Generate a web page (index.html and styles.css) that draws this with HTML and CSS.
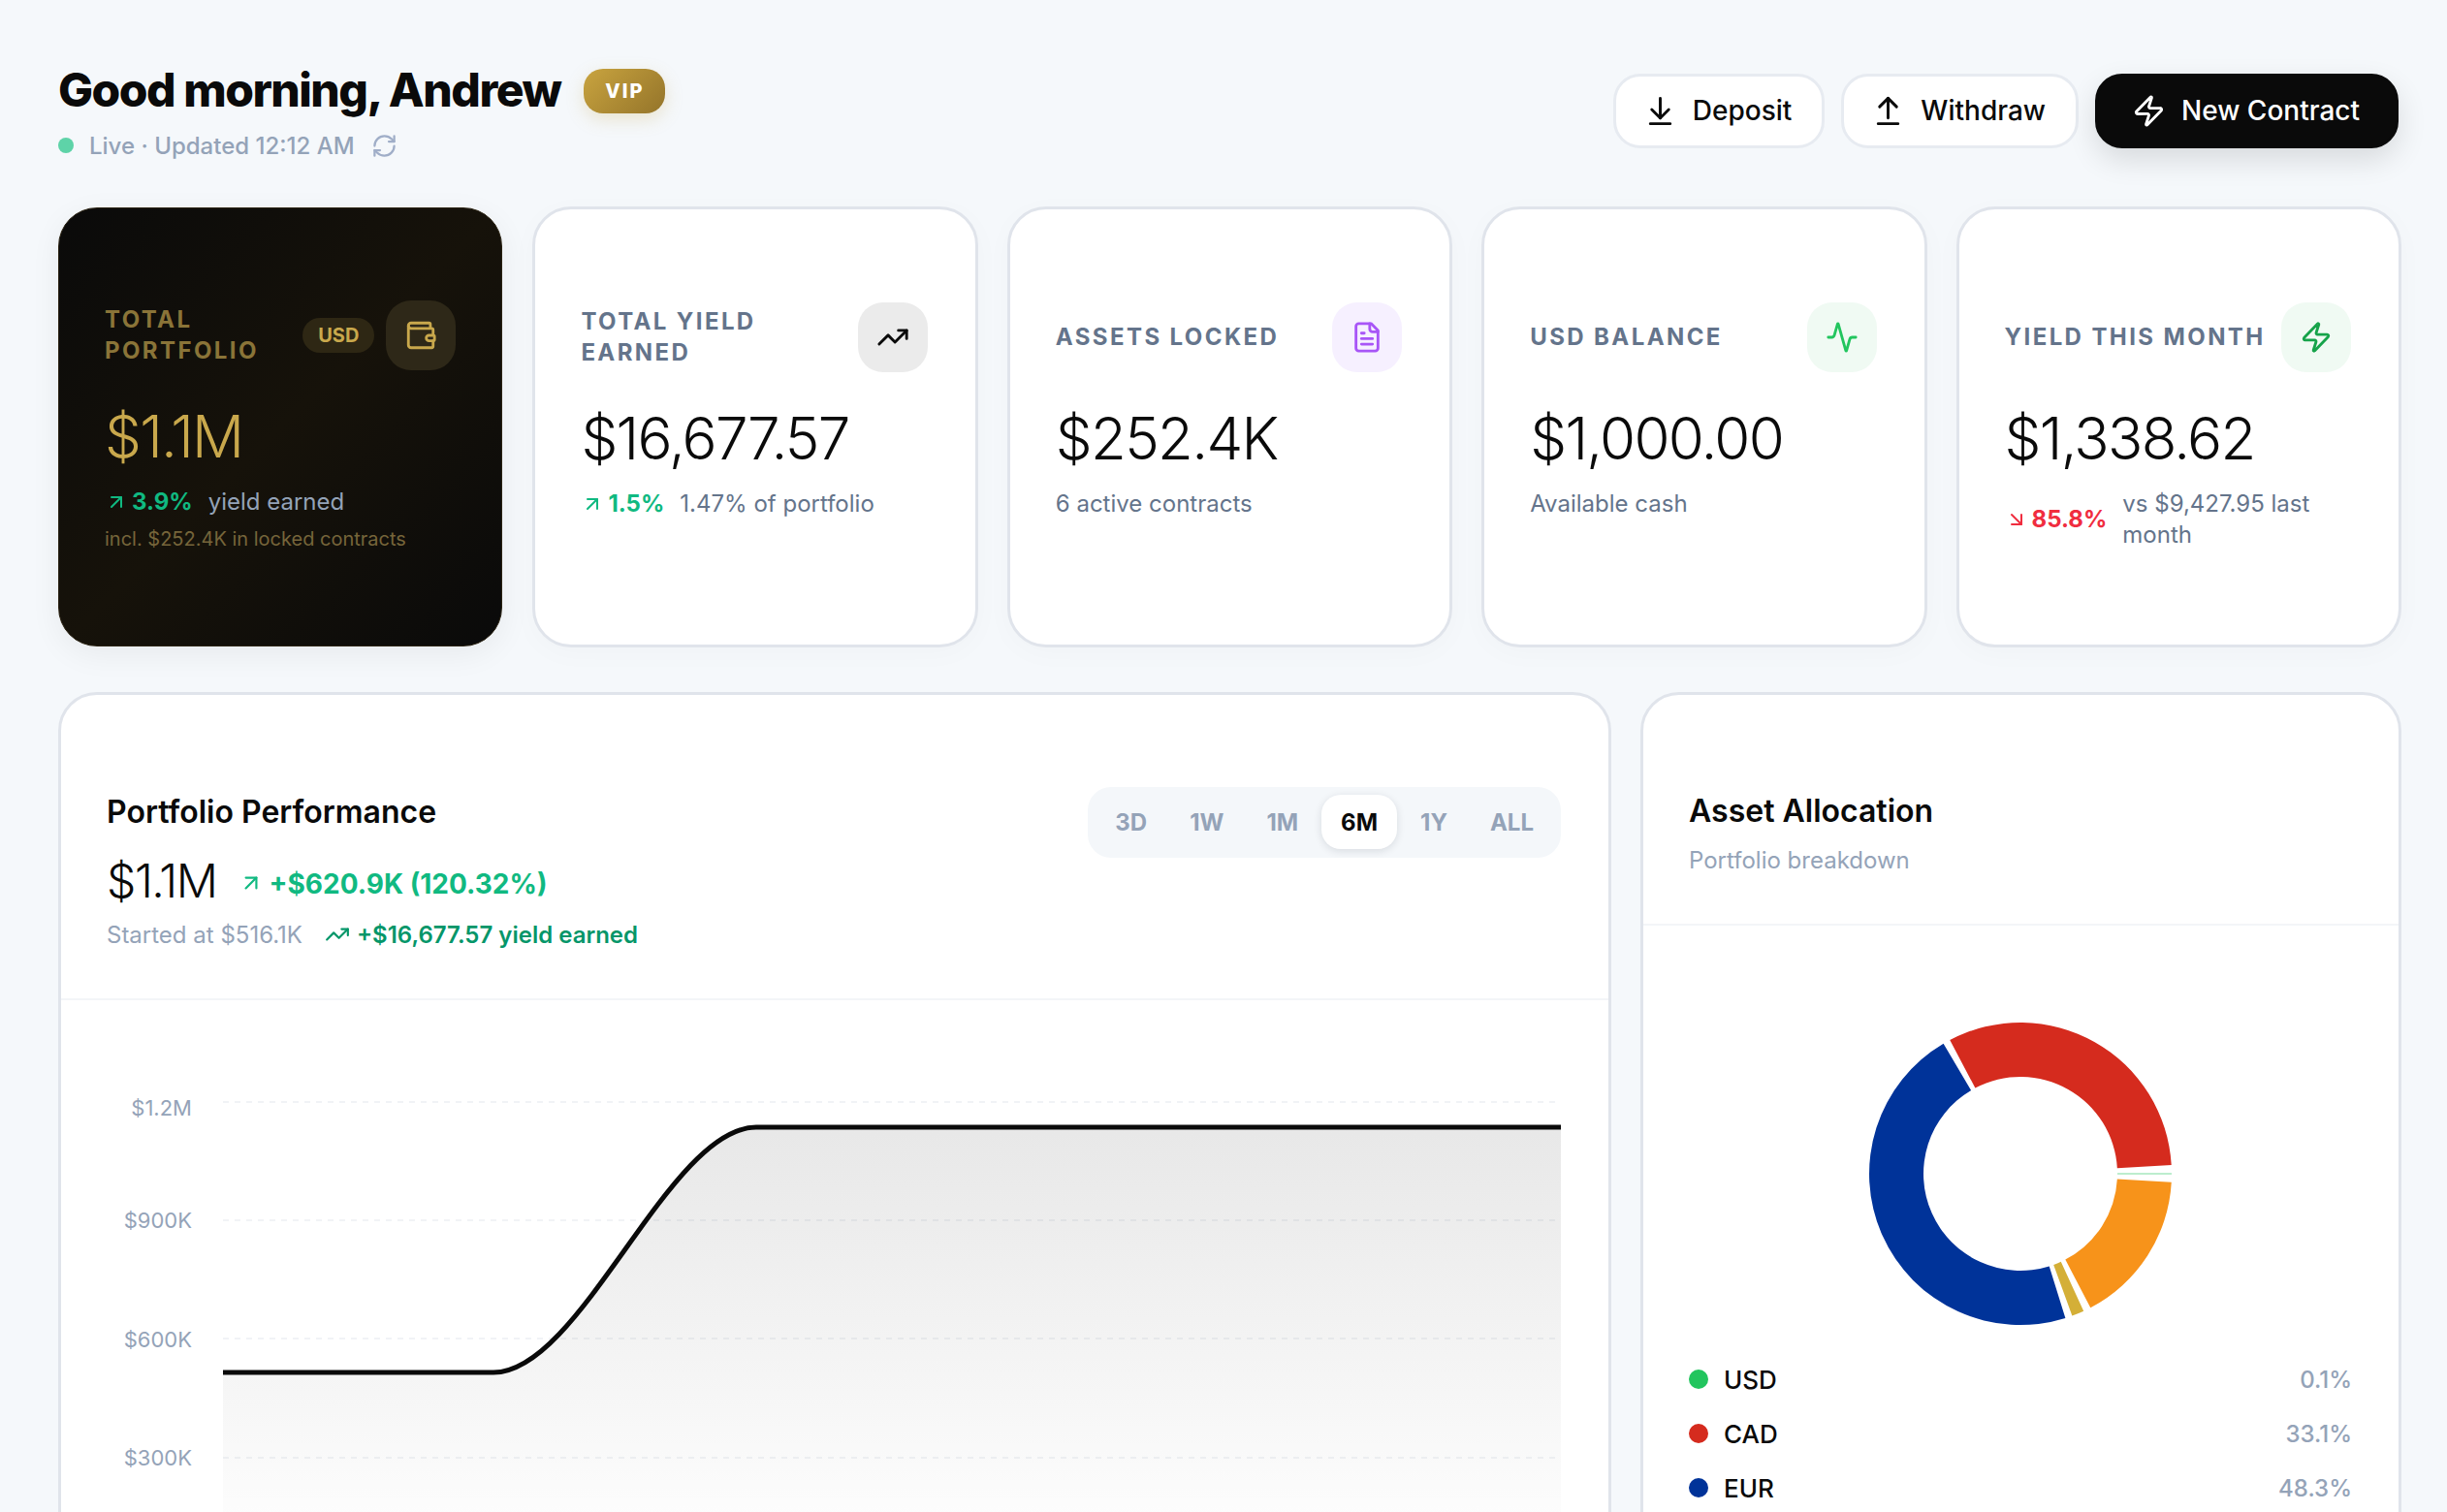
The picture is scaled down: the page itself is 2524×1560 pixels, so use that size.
FILE: index.html
```html
<!DOCTYPE html>
<html lang="en">
<head>
<meta charset="utf-8">
<title>Dashboard</title>
<link rel="stylesheet" href="styles.css">
</head>
<body>
<main class="page">
  <header class="top">
    <div class="greet">
      <div class="greet-row">
        <h1 class="title">Good morning, Andrew</h1>
        <span class="vip">VIP</span>
      </div>
      <div class="live-row">
        <span class="live-dot"></span>
        <span>Live · Updated 12:12 AM</span>
        <svg class="ic ic-refresh" viewBox="0 0 24 24"><path d="M3 12a9 9 0 0 1 9-9 9.75 9.75 0 0 1 6.74 2.74L21 8"/><path d="M21 3v5h-5"/><path d="M21 12a9 9 0 0 1-9 9 9.75 9.75 0 0 1-6.74-2.74L3 16"/><path d="M8 16H3v5"/></svg>
      </div>
    </div>
    <div class="actions">
      <button class="btn"><svg class="ic ic-btn" viewBox="0 0 24 24"><path d="M12 17V3"/><path d="m6 11 6 6 6-6"/><path d="M19 21H5"/></svg>Deposit</button>
      <button class="btn"><svg class="ic ic-btn" viewBox="0 0 24 24"><path d="m18 9-6-6-6 6"/><path d="M12 3v14"/><path d="M5 21h14"/></svg>Withdraw</button>
      <button class="btn btn-dark"><svg class="ic ic-btn" viewBox="0 0 24 24"><path d="M4 14a1 1 0 0 1-.78-1.63l9.9-10.2a.5.5 0 0 1 .86.46l-1.92 6.02A1 1 0 0 0 13 10h7a1 1 0 0 1 .78 1.63l-9.9 10.2a.5.5 0 0 1-.86-.46l1.92-6.02A1 1 0 0 0 11 14z"/></svg>New Contract</button>
    </div>
  </header>

  <section class="stats">
    <article class="stat stat-dark">
      <div class="stat-head">
        <div class="label">TOTAL PORTFOLIO</div>
        <div class="head-right">
          <span class="cur">USD</span>
          <span class="icon-box box-gold"><svg class="ic ic-stat" viewBox="0 0 24 24"><path d="M19 7V4a1 1 0 0 0-1-1H5a2 2 0 0 0 0 4h15a1 1 0 0 1 1 1v4h-3a2 2 0 0 0 0 4h3a1 1 0 0 0 1-1v-2a1 1 0 0 0-1-1"/><path d="M3 5v14a2 2 0 0 0 2 2h15a1 1 0 0 0 1-1v-4"/></svg></span>
        </div>
      </div>
      <div class="value">$1.1M</div>
      <div class="sub">
        <span class="delta up"><svg class="ic ic-arrow" viewBox="0 0 24 24"><path d="M7 7h10v10"/><path d="M7 17 17 7"/></svg>3.9%</span>
        <span class="sub-text">yield earned</span>
      </div>
      <div class="note">incl. $252.4K in locked contracts</div>
    </article>

    <article class="stat">
      <div class="stat-head">
        <div class="label">TOTAL YIELD EARNED</div>
        <span class="icon-box box-grey"><svg class="ic ic-stat" viewBox="0 0 24 24"><path d="M22 7 13.5 15.5 8.5 10.5 2 17"/><path d="M16 7h6v6"/></svg></span>
      </div>
      <div class="value">$16,677.57</div>
      <div class="sub">
        <span class="delta up"><svg class="ic ic-arrow" viewBox="0 0 24 24"><path d="M7 7h10v10"/><path d="M7 17 17 7"/></svg>1.5%</span>
        <span class="sub-text">1.47% of portfolio</span>
      </div>
    </article>

    <article class="stat">
      <div class="stat-head">
        <div class="label">ASSETS LOCKED</div>
        <span class="icon-box box-purple"><svg class="ic ic-stat" viewBox="0 0 24 24"><path d="M15 2H6a2 2 0 0 0-2 2v16a2 2 0 0 0 2 2h12a2 2 0 0 0 2-2V7Z"/><path d="M14 2v4a2 2 0 0 0 2 2h4"/><path d="M10 9H8"/><path d="M16 13H8"/><path d="M16 17H8"/></svg></span>
      </div>
      <div class="value">$252.4K</div>
      <div class="sub"><span class="sub-text">6 active contracts</span></div>
    </article>

    <article class="stat">
      <div class="stat-head">
        <div class="label">USD BALANCE</div>
        <span class="icon-box box-green"><svg class="ic ic-stat ic-activity" viewBox="0 0 24 24"><path d="M22 12h-2.48a2 2 0 0 0-1.93 1.46l-2.35 8.36a.25.25 0 0 1-.48 0L9.24 2.18a.25.25 0 0 0-.48 0l-2.35 8.36A2 2 0 0 1 4.49 12H2"/></svg></span>
      </div>
      <div class="value">$1,000.00</div>
      <div class="sub"><span class="sub-text">Available cash</span></div>
    </article>

    <article class="stat">
      <div class="stat-head">
        <div class="label">YIELD THIS MONTH</div>
        <span class="icon-box box-green"><svg class="ic ic-stat" viewBox="0 0 24 24"><path d="M4 14a1 1 0 0 1-.78-1.63l9.9-10.2a.5.5 0 0 1 .86.46l-1.92 6.02A1 1 0 0 0 13 10h7a1 1 0 0 1 .78 1.63l-9.9 10.2a.5.5 0 0 1-.86-.46l1.92-6.02A1 1 0 0 0 11 14z"/></svg></span>
      </div>
      <div class="value">$1,338.62</div>
      <div class="sub">
        <span class="delta down"><svg class="ic ic-arrow" viewBox="0 0 24 24"><path d="m7 7 10 10"/><path d="M17 7v10H7"/></svg>85.8%</span>
        <span class="sub-text">vs $9,427.95 last month</span>
      </div>
    </article>
  </section>

  <section class="panels">
    <article class="panel">
      <div class="perf-head">
        <div>
          <h2 class="panel-title">Portfolio Performance</h2>
          <div class="perf-value-row">
            <span class="perf-value">$1.1M</span>
            <svg class="ic ic-perf" viewBox="0 0 24 24"><path d="M7 7h10v10"/><path d="M7 17 17 7"/></svg>
            <span class="perf-gain">+$620.9K (120.32%)</span>
          </div>
          <div class="perf-sub">
            <span class="perf-start">Started at $516.1K</span>
            <svg class="ic ic-yield" viewBox="0 0 24 24"><path d="M22 7 13.5 15.5 8.5 10.5 2 17"/><path d="M16 7h6v6"/></svg>
            <span class="perf-yield">+$16,677.57 yield earned</span>
          </div>
        </div>
        <div class="tabs">
          <span class="tab">3D</span>
          <span class="tab">1W</span>
          <span class="tab">1M</span>
          <span class="tab tab-on">6M</span>
          <span class="tab">1Y</span>
          <span class="tab">ALL</span>
        </div>
      </div>
      <svg class="chart" viewBox="63 1032 1596 700" aria-label="Portfolio chart">
        <defs>
          <linearGradient id="fill" gradientUnits="userSpaceOnUse" x1="0" y1="1163" x2="0" y2="1610">
            <stop offset="0" stop-color="#0a0a0a" stop-opacity=".095"/>
            <stop offset="1" stop-color="#0a0a0a" stop-opacity="0"/>
          </linearGradient>
        </defs>
        <g class="grid-lines">
          <line x1="230" x2="1610" y1="1137" y2="1137"/>
          <line x1="230" x2="1610" y1="1259" y2="1259"/>
          <line x1="230" x2="1610" y1="1381" y2="1381"/>
          <line x1="230" x2="1610" y1="1504" y2="1504"/>
        </g>
        <g class="y-labels">
          <text x="198" y="1151">$1.2M</text>
          <text x="198" y="1267">$900K</text>
          <text x="198" y="1390">$600K</text>
          <text x="198" y="1512">$300K</text>
        </g>
        <path class="area" d="M230 1416H509C599.3 1416 689.7 1163 780 1163H1610V1640H230Z"/>
        <path class="line" d="M230 1416H509C599.3 1416 689.7 1163 780 1163H1610"/>
      </svg>
    </article>

    <article class="panel">
      <div class="alloc-head">
        <h2 class="panel-title">Asset Allocation</h2>
        <div class="alloc-sub">Portfolio breakdown</div>
      </div>
      <div class="donut-wrap">
        <svg class="donut" viewBox="-170 -170 340 340">
          <path class="seg-red" d="M155.74 -8.98A156 156 0 0 0 -72.76 -138L-46.64 -88.46A100 100 0 0 1 99.83 -5.76Z"/>
          <path class="seg-blue" d="M-79.4 -134.27A156 156 0 0 0 46.39 148.95L29.74 95.48A100 100 0 0 1 -50.9 -86.07Z"/>
          <path class="seg-gold" d="M53.35 146.59A156 156 0 0 0 65.19 141.73L41.79 90.85A100 100 0 0 1 34.2 93.97Z"/>
          <path class="seg-orange" d="M72.27 138.25A156 156 0 0 0 155.76 8.71L99.84 5.58A100 100 0 0 1 46.33 88.62Z"/>
          <line class="seg-green" x1="100" x2="156" y1="0" y2="0"/>
        </svg>
      </div>
      <ul class="legend">
        <li class="legend-row"><span class="dot dot-green"></span><span class="legend-name">USD</span><span class="legend-val">0.1%</span></li>
        <li class="legend-row"><span class="dot dot-red"></span><span class="legend-name">CAD</span><span class="legend-val">33.1%</span></li>
        <li class="legend-row"><span class="dot dot-blue"></span><span class="legend-name">EUR</span><span class="legend-val">48.3%</span></li>
      </ul>
    </article>
  </section>
</main>
</body>
</html>
```

FILE: styles.css
```css
* { box-sizing: border-box; }
html, body { margin: 0; height: 1560px; overflow: hidden; }
body {
  background: #f5f8fb;
  color: #0a0a0a;
  font-family: Inter, "Liberation Sans", sans-serif;
}
.page { padding: 64px 47px 0 60px; }

.ic {
  fill: none;
  stroke: currentColor;
  stroke-width: 2;
  stroke-linecap: round;
  stroke-linejoin: round;
  flex: none;
  display: block;
}

/* header */
.top { display: flex; justify-content: space-between; align-items: center; height: 102px; margin-right: 3px; }
.greet-row { display: flex; align-items: center; gap: 24px; height: 58px; }
.title { margin: 0; font-size: 48px; line-height: 58px; font-weight: 800; letter-spacing: -1.5px; }
.vip {
  display: flex; align-items: center; justify-content: center;
  width: 84px; height: 46px; margin-top: 2px; border-radius: 20px;
  background: linear-gradient(135deg, #c9a43f, #94742a);
  color: #fff; font-size: 20px; font-weight: 800; letter-spacing: 2px;
  box-shadow: 0 6px 18px rgba(201, 168, 76, .25);
}
.live-row { display: flex; align-items: center; gap: 14px; height: 32px; margin-top: 12px; color: #94a3b8; font-size: 24px; font-weight: 500; }
.live-dot { width: 16px; height: 16px; border-radius: 50%; background: #5ed3a8; margin-right: 2px; }
.ic-refresh { width: 27px; height: 27px; margin-left: 3px; color: #a0aec8; }

.actions { display: flex; gap: 17px; margin-bottom: 2px; }
.btn {
  display: flex; align-items: center; gap: 16px;
  height: 77px; padding: 0 31px 0 28px;
  background: #fff; border: 3px solid #e7ebf1; border-radius: 28px;
  font: 500 28px Inter, sans-serif; color: #0a0a0a;
}
.btn-dark {
  background: #0a0a0a; border-color: #0a0a0a; color: #fff;
  padding: 0 37px 0 35px;
  box-shadow: 0 12px 30px rgba(10, 10, 10, .12);
}
.ic-btn { width: 35px; height: 35px; }

/* stat cards */
.stats { display: grid; grid-template-columns: repeat(5, minmax(0, 1fr)); gap: 30px; margin-top: 47px; }
.stat {
  padding: 96px 49px 96px 47px;
  background: #fff; border: 3px solid #e0e4eb; border-radius: 40px;
  box-shadow: 0 6px 30px rgba(15, 23, 42, .025);
}
.stat-dark {
  margin: 1px 1px 1px 0;
  padding: 95px 47px 95px 47px;
  border: 1px solid #2a2212;
  background: linear-gradient(135deg, #0a0a0a 0%, #16120a 50%, #0a0a0a 100%);
  box-shadow: 0 8px 32px rgba(10, 10, 10, .06);
}
.stat-head { display: flex; justify-content: space-between; align-items: center; gap: 12px; height: 72px; }
.label { font-size: 24px; line-height: 32px; font-weight: 700; letter-spacing: 2.4px; color: #64748b; }
.stat-dark .label { color: #8a7438; }
.head-right { display: flex; align-items: center; gap: 12px; }
.cur {
  height: 36px; padding: 0 16px; display: flex; align-items: center;
  border-radius: 18px; background: #2e2714; color: #c9a84c;
  font-size: 20px; font-weight: 700;
}
.icon-box { width: 72px; height: 72px; border-radius: 26px; display: flex; align-items: center; justify-content: center; flex: none; }
.ic-stat { width: 34px; height: 34px; }
.box-gold { background: #2e2818; color: #c9a84c; }
.box-grey { background: #ebebeb; color: #0a0a0a; }
.box-purple { background: #f6f0ff; color: #a855f7; }
.box-green { background: #f0faf3; color: #16a34a; }
.ic-activity { color: #22c55e; }

.value { margin-top: 28px; font-size: 60px; line-height: 80px; font-weight: 300; letter-spacing: -1.7px; color: #0a0a0a; }
.stat-dark .value { color: #c9a84c; }
.sub { display: flex; align-items: center; gap: 16px; margin-top: 12px; font-size: 24px; line-height: 32px; }
.sub-text { color: #64748b; }
.stat-dark .sub { margin-top: 12px; }
.stat-dark .sub-text { color: #94a3b8; }
.delta { display: flex; align-items: center; gap: 4px; font-weight: 700; flex: none; }
.up { color: #10b981; }
.down { color: #f02d3f; }
.ic-arrow { width: 24px; height: 24px; stroke-width: 2; }
.note { margin-top: 7px; font-size: 20px; line-height: 30px; color: #76653a; }

/* panels */
.panels { display: grid; grid-template-columns: minmax(0, 1602fr) minmax(0, 785fr); gap: 30px; margin-top: 46px; }
.panel { background: #fff; border: 3px solid #e0e4eb; border-radius: 40px; overflow: hidden; }
.panel-title { margin: 0; font-size: 32px; line-height: 40px; font-weight: 600; }

.perf-head {
  display: flex; justify-content: space-between; align-items: flex-start;
  padding: 95px 49px 50px 47px;
  border-bottom: 2px solid #f3f5f8;
}
.perf-head .panel-title { margin-top: 6px; }
.perf-value-row { display: flex; align-items: center; height: 60px; margin-top: 20px; }
.perf-value { font-size: 48px; font-weight: 300; letter-spacing: -1.44px; margin-right: 22px; }
.ic-perf { width: 26px; height: 26px; color: #10b981; margin-right: 6px; margin-top: 5px; }
.perf-gain { font-size: 28px; font-weight: 700; color: #10b981; margin-top: 7px; }
.perf-sub { display: flex; align-items: center; height: 32px; margin-top: 10px; font-size: 24px; }
.perf-start { color: #94a3b8; }
.ic-yield { width: 26px; height: 26px; color: #059669; margin: 0 7px 0 23px; }
.perf-yield { color: #059669; font-weight: 600; }

.tabs { display: flex; gap: 4px; padding: 8px; height: 73px; background: #f4f7fa; border-radius: 24px; }
.tab { display: flex; align-items: center; height: 56px; padding: 0 20px; font-size: 24px; font-weight: 700; color: #94a3b8; border-radius: 20px; }
.tab-on { background: #fff; color: #0a0a0a; box-shadow: 0 2px 8px rgba(15, 23, 42, .12); }

.chart { display: block; width: 1596px; height: 700px; }
.grid-lines line { stroke: #f1f3f6; stroke-width: 2; stroke-dasharray: 6 6; }
.y-labels text { font-size: 22px; fill: #94a3b8; text-anchor: end; }
.area { fill: url(#fill); }
.line { fill: none; stroke: #0a0a0a; stroke-width: 5; }

.alloc-head { padding: 100px 48px 49px 47px; border-bottom: 2px solid #f3f5f8; }
.alloc-sub { margin-top: 15px; font-size: 24px; line-height: 32px; color: #94a3b8; }
.donut-wrap { display: flex; justify-content: center; margin-top: 86px; padding-right: 2px; }
.donut { display: block; width: 340px; height: 340px; }
.seg-red { fill: #d52b1e; }
.seg-blue { fill: #003399; }
.seg-gold { fill: #d4af37; }
.seg-orange { fill: #f7931a; }
.seg-green { stroke: #22c55e; stroke-width: 1; opacity: .6; }

.legend { list-style: none; margin: 14px 0 0; padding: 0 48px 200px 47px; }
.legend-row { display: flex; align-items: center; height: 56px; }
.dot { width: 20px; height: 20px; border-radius: 50%; margin-right: 16px; }
.dot-green { background: #22c55e; }
.dot-red { background: #d52b1e; }
.dot-blue { background: #003399; }
.legend-name { font-size: 26px; font-weight: 500; }
.legend-val { margin-left: auto; font-size: 24px; font-weight: 500; color: #94a3b8; }
```
